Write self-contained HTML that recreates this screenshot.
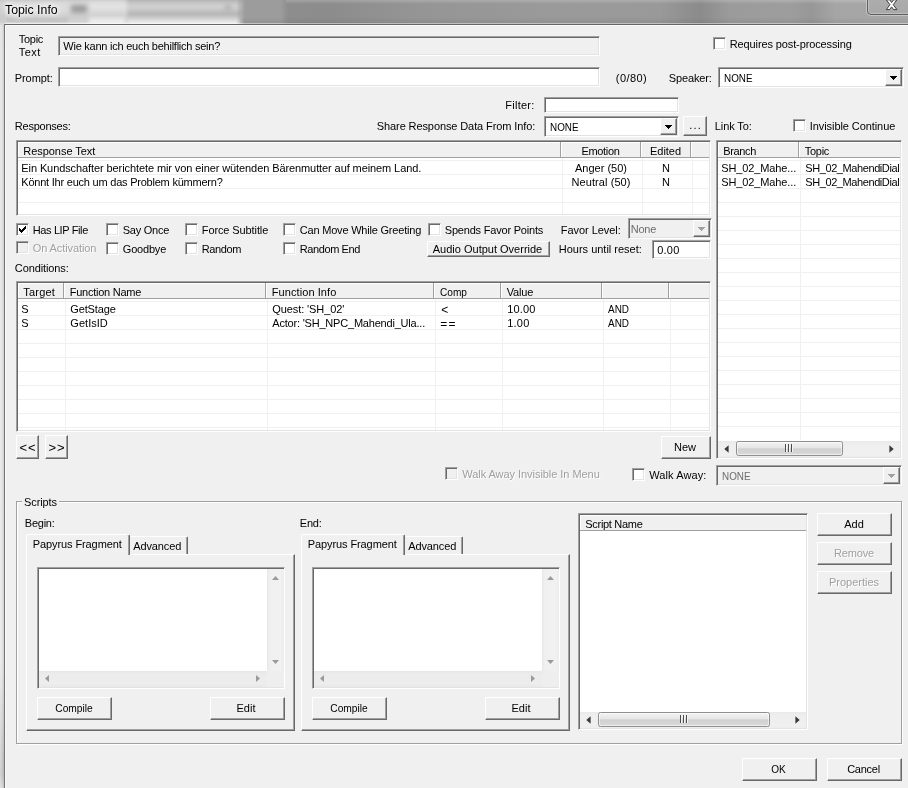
<!DOCTYPE html><html><head><meta charset="utf-8"><title>Topic Info</title><style>
*{box-sizing:border-box;margin:0;padding:0}
html,body{width:908px;height:788px;overflow:hidden;background:#f0f0f0}
body{filter:grayscale(1)}
body{position:relative;font-family:"Liberation Sans",sans-serif;font-size:11px;color:#000;line-height:13px;letter-spacing:-0.1px}
.a{position:absolute}
.t{position:absolute;white-space:nowrap;line-height:13px;height:13px}
.dis{color:#a0a0a0;text-shadow:1px 1px 0 #fff}
.sunk{position:absolute;border:1px solid;border-color:#a0a0a0 #fff #fff #a0a0a0;box-shadow:inset 1px 1px 0 #696969,inset -1px -1px 0 #e3e3e3;background:#fff}
.sunk.g{background:#f0f0f0}
.btn{position:absolute;border:1px solid;border-color:#fff #696969 #696969 #fff;box-shadow:inset -1px -1px 0 #a0a0a0,inset 1px 1px 0 #f0f0f0;background:#f0f0f0;text-align:center;white-space:nowrap}
.btn span{position:absolute;left:0;right:0;line-height:13px}
.cb{position:absolute;width:13px;height:13px;border:1px solid;border-color:#a0a0a0 #fff #fff #a0a0a0;box-shadow:inset 1px 1px 0 #696969,inset -1px -1px 0 #e3e3e3;background:#fff}
.cb.g{background:#f0f0f0}
.hd{position:absolute;background:#f0f0f0;border-right:1px solid #a0a0a0;border-bottom:1px solid #a0a0a0;box-shadow:inset 1px 1px 0 #fff;white-space:nowrap;overflow:hidden}
.hd span{position:absolute;line-height:13px;top:3px}
.gl{position:absolute;background:#f0f0f0}
</style></head><body>
<div class="a" id="tb" style="left:0;top:0;width:908px;height:25px;overflow:hidden;background:linear-gradient(90deg,#9c9c9c 0,#9c9c9c 281px,#8d8d8d 288px,#8c8c8c 330px,#959595 420px,#9a9a9a 560px,#999 660px,#8b8b8b 700px,#9b9b9b 730px,#9d9d9d 790px,#979797 812px,#a5a5a5 835px,#a7a7a7 908px)">
<div class="a" style="left:0;top:0;width:246px;height:25px;-webkit-mask-image:linear-gradient(90deg,#000 0,#000 236px,transparent 245px);mask-image:linear-gradient(90deg,#000 0,#000 236px,transparent 245px);background:linear-gradient(#c9c9c9 0,#d6d6d6 2px,#dcdcdc 5px,#dbdbdb 10px,#d3d3d3 14px,#cecece 18px,#d2d2d2 22px,#e6e6e6 23px)">
<div class="a" style="left:124px;top:0;width:122px;height:24px;-webkit-mask-image:linear-gradient(90deg,transparent,#000 6px,#000 116px,transparent);mask-image:linear-gradient(90deg,transparent,#000 6px,#000 116px,transparent);background:linear-gradient(#b4b4b4 0,#c0c0c0 2px,#cecece 5px,#cecece 8px,#c2c2c2 11px,#b7b7b7 14px,#c6c6c6 17px,#dadada 20px,#eeeeee 23px)"></div>
<div class="a" style="left:86px;top:0;width:42px;height:24px;-webkit-mask-image:linear-gradient(90deg,transparent,#000 6px,#000 36px,transparent);mask-image:linear-gradient(90deg,transparent,#000 6px,#000 36px,transparent);background:linear-gradient(#cfcfcf 0,#dedede 3px,#e3e3e3 7px,#d8d8d8 12px,#d2d2d2 15px,#e4e4e4 19px,#f0f0f0 23px)"></div>
<div class="a" style="left:6px;top:18px;width:62px;height:4px;background:#c2c2c2;filter:blur(1.500px)"></div>
<div class="a" style="left:71px;top:5px;width:16px;height:8px;background:#9a9a9a;filter:blur(2.500px)"></div>
<div class="a" style="left:225px;top:5px;width:6px;height:5px;background:#aaa;filter:blur(2.500px)"></div>
<div class="a" style="left:0;top:0;width:5px;height:25px;background:rgba(200,200,200,.5)"></div>
</div>
<div class="a" style="left:286px;top:0;width:622px;height:4px;background:linear-gradient(rgba(255,255,255,.2),rgba(255,255,255,0))"></div>
<div class="a" style="left:240px;top:17px;width:668px;height:6px;background:linear-gradient(rgba(0,0,0,0),rgba(0,0,0,.06))"></div>
<div class="a" style="left:5px;top:23px;width:903px;height:1px;background:rgba(255,255,255,.4)"></div>
</div>
<div class="a" style="left:0;top:25px;width:4px;height:763px;background:linear-gradient(#e2e2e2 0,#e6e6e6 640px,#cfcfcf 720px,#c8c8c8 750px,#dadada 763px)"></div>
<div class="a" style="left:0;top:25px;width:4px;height:763px;background:linear-gradient(90deg,rgba(255,255,255,.25),rgba(255,255,255,0) 2px,rgba(0,0,0,.1) 4px)"></div>
<div class="a" style="left:4px;top:24px;width:904px;height:1px;background:#666"></div>
<div class="a" style="left:4px;top:24px;width:1px;height:764px;background:#747474"></div>
<div class="a" style="left:5px;top:25px;width:903px;height:1px;background:#fafafa"></div>
<div class="a" style="left:5px;top:25px;width:1px;height:763px;background:#fafafa"></div>
<div class="t" style="left:5px;top:3px;font-size:12.3px;line-height:15px;height:15px;letter-spacing:0;text-shadow:0 0 5px #fff,0 0 5px #fff,0 0 8px #fff,0 0 10px #fff">Topic Info</div>
<div class="a" style="left:866px;top:-3px;width:46px;height:19px;border:1px solid rgba(255,255,255,.35);border-radius:0 0 0 5px"></div>
<div class="a" style="left:867px;top:-3px;width:45px;height:18px;border:1px solid #5e5e5e;border-radius:0 0 0 4px;background:linear-gradient(#adadad,#a8a8a8);box-shadow:inset 0 0 0 1px rgba(255,255,255,.25)"></div>
<svg class="a" style="left:884px;top:-1px" width="16" height="13" viewBox="0 0 16 13"><path d="M2.30 0.80 L5.60 0.80 L7.60 3.48 L9.60 0.80 L12.90 0.80 L9.25 5.70 L12.90 10.60 L9.60 10.60 L7.60 7.92 L5.60 10.60 L2.30 10.60 L5.95 5.70z" fill="#fbfbfb" stroke="#3e3e48" stroke-width="1" stroke-linejoin="round"/></svg>
<div class="t " style="left:18.8px;top:33px;letter-spacing:-0.297px;">Topic</div>
<div class="t " style="left:18.8px;top:46px;letter-spacing:0.438px;">Text</div>
<div class="sunk g" style="left:58px;top:36px;width:542px;height:20px"><div class="t" style="left:4.3px;top:3px;letter-spacing:-0.245px;">Wie kann ich euch behilflich sein?</div></div>
<div class="cb " style="left:713px;top:37px"></div>
<div class="t " style="left:729.8px;top:38px;letter-spacing:-0.119px;">Requires post-processing</div>
<div class="t " style="left:14.8px;top:72px;letter-spacing:-0.086px;">Prompt:</div>
<div class="sunk " style="left:58px;top:67px;width:542px;height:20px"></div>
<div class="t " style="left:615.8px;top:72px;letter-spacing:0.45px;">(0/80)</div>
<div class="t " style="left:668.8px;top:72px;letter-spacing:-0.147px;">Speaker:</div>
<div class="sunk " style="left:718px;top:67px;width:186px;height:21px">
<div class="t" style="left:4.8px;top:4px;letter-spacing:0;transform:scaleX(0.897);transform-origin:left center;">NONE</div>
<div class="btn" style="right:1px;top:1px;width:17px;height:17px;left:auto">
<svg class="a" style="left:4px;top:6px" width="7" height="4" viewBox="0 0 7 4" shape-rendering="crispEdges"><path d="M0 0h7l-3.5 4z" fill="#000"/></svg>
</div></div>
<div class="t " style="left:505.3px;top:99px;letter-spacing:0.25px;">Filter:</div>
<div class="sunk " style="left:544px;top:97px;width:135px;height:16px"></div>
<div class="t " style="left:14.8px;top:120px;letter-spacing:-0.233px;">Responses:</div>
<div class="t " style="left:376.8px;top:120px;letter-spacing:-0.101px;">Share Response Data From Info:</div>
<div class="sunk " style="left:544px;top:116px;width:135px;height:21px">
<div class="t" style="left:4.8px;top:4px;letter-spacing:0;transform:scaleX(0.897);transform-origin:left center;">NONE</div>
<div class="btn" style="right:1px;top:1px;width:17px;height:17px;left:auto">
<svg class="a" style="left:4px;top:6px" width="7" height="4" viewBox="0 0 7 4" shape-rendering="crispEdges"><path d="M0 0h7l-3.5 4z" fill="#000"/></svg>
</div></div>
<div class="btn" style="left:683px;top:116px;width:24px;height:20px"><span class="" style="top:2px;left:0px;"><b style="font-weight:400;letter-spacing:1.2px;margin-right:-1.2px">...</b></span></div>
<div class="t " style="left:714.8px;top:120px;letter-spacing:-0.103px;">Link To:</div>
<div class="cb " style="left:793px;top:119px"></div>
<div class="t " style="left:809.8px;top:120px;letter-spacing:-0.079px;">Invisible Continue</div>
<div class="sunk" style="left:16px;top:140px;width:695px;height:76px;overflow:hidden">
<div class="a" style="left:1px;top:1px;width:691px;height:72px;overflow:hidden">
<div class="gl" style="left:0;top:18px;width:691px;height:1px"></div>
<div class="gl" style="left:0;top:32px;width:691px;height:1px"></div>
<div class="gl" style="left:0;top:46px;width:691px;height:1px"></div>
<div class="gl" style="left:0;top:60px;width:691px;height:1px"></div>
<div class="gl" style="left:544px;top:16px;width:1px;height:56px"></div>
<div class="hd" style="left:0px;top:0;width:543px;height:16px"><span style="left:5.3px;letter-spacing:-0.048px;">Response Text</span></div>
<div class="gl" style="left:624px;top:16px;width:1px;height:56px"></div>
<div class="hd" style="left:543px;top:0;width:80px;height:16px"><span style="left:0;right:0;text-align:center;letter-spacing:-0.31px;">Emotion</span></div>
<div class="gl" style="left:674px;top:16px;width:1px;height:56px"></div>
<div class="hd" style="left:623px;top:0;width:50px;height:16px"><span style="left:0;right:0;text-align:center;letter-spacing:-0.041px;">Edited</span></div>
<div class="hd" style="left:673px;top:0;width:20px;height:16px"><span style="left:5.8px;"></span></div>
<div class="t" style="left:3.3px;top:20px;letter-spacing:-0.093px;">Ein Kundschafter berichtete mir von einer wütenden Bärenmutter auf meinem Land.</div>
<div class="t" style="left:543px;width:80px;top:20px;text-align:center;letter-spacing:0.002px;">Anger (50)</div>
<div class="t" style="left:623px;width:50px;top:20px;text-align:center;">N</div>
<div class="t" style="left:3.3px;top:34px;letter-spacing:-0.222px;">Könnt Ihr euch um das Problem kümmern?</div>
<div class="t" style="left:543px;width:80px;top:34px;text-align:center;letter-spacing:0.084px;">Neutral (50)</div>
<div class="t" style="left:623px;width:50px;top:34px;text-align:center;">N</div>

</div></div>
<div class="sunk" style="left:716px;top:140px;width:186px;height:319px;overflow:hidden">
<div class="a" style="left:1px;top:1px;width:182px;height:315px;overflow:hidden">
<div class="gl" style="left:0;top:18px;width:182px;height:1px"></div>
<div class="gl" style="left:0;top:32px;width:182px;height:1px"></div>
<div class="gl" style="left:0;top:46px;width:182px;height:1px"></div>
<div class="gl" style="left:0;top:60px;width:182px;height:1px"></div>
<div class="gl" style="left:0;top:74px;width:182px;height:1px"></div>
<div class="gl" style="left:0;top:88px;width:182px;height:1px"></div>
<div class="gl" style="left:0;top:102px;width:182px;height:1px"></div>
<div class="gl" style="left:0;top:116px;width:182px;height:1px"></div>
<div class="gl" style="left:0;top:130px;width:182px;height:1px"></div>
<div class="gl" style="left:0;top:144px;width:182px;height:1px"></div>
<div class="gl" style="left:0;top:158px;width:182px;height:1px"></div>
<div class="gl" style="left:0;top:172px;width:182px;height:1px"></div>
<div class="gl" style="left:0;top:186px;width:182px;height:1px"></div>
<div class="gl" style="left:0;top:200px;width:182px;height:1px"></div>
<div class="gl" style="left:0;top:214px;width:182px;height:1px"></div>
<div class="gl" style="left:0;top:228px;width:182px;height:1px"></div>
<div class="gl" style="left:0;top:242px;width:182px;height:1px"></div>
<div class="gl" style="left:0;top:256px;width:182px;height:1px"></div>
<div class="gl" style="left:0;top:270px;width:182px;height:1px"></div>
<div class="gl" style="left:0;top:284px;width:182px;height:1px"></div>
<div class="gl" style="left:82px;top:16px;width:1px;height:282px"></div>
<div class="hd" style="left:0px;top:0;width:81px;height:16px"><span style="left:5.3px;letter-spacing:-0.372px;">Branch</span></div>
<div class="hd" style="left:81px;top:0;width:103px;height:16px"><span style="left:5.8px;letter-spacing:-0.297px;">Topic</span></div>
<div class="t" style="left:3.3px;top:20px;letter-spacing:-0.12px;">SH_02_Mahe...</div>
<div class="t" style="left:87.3px;top:20px;letter-spacing:-0.413px;">SH_02_MahendiDial</div>
<div class="t" style="left:3.3px;top:34px;letter-spacing:-0.12px;">SH_02_Mahe...</div>
<div class="t" style="left:87.3px;top:34px;letter-spacing:-0.413px;">SH_02_MahendiDial</div>
<div class="a" style="left:0px;top:299px;width:182px;height:17px;background:linear-gradient(#e9e9e9,#eee 3px,#f0f0f0 14px,#ebebeb)"><svg class="a" style="left:6px;top:4px" width="5" height="8" viewBox="0 0 5 8"><path d="M4.600 .3v7.400L.3 4z" fill="#3a3a3a"/></svg><svg class="a" style="right:6px;top:4px" width="5" height="8" viewBox="0 0 5 8"><path d="M.4 .3v7.400L4.700 4z" fill="#3a3a3a"/></svg><div class="a" style="left:18px;top:0;width:107px;height:15px;border:1px solid #8f8f8f;border-radius:2.500px;background:linear-gradient(#f3f3f3,#e6e6e6 46%,#d0d0d0 52%,#d9d9d9);box-shadow:inset 0 0 0 1px rgba(255,255,255,.55)"><div class="a" style="left:48px;top:2px;width:1px;height:8px;background:#4c4c4c;box-shadow:3px 0 0 #4c4c4c,6px 0 0 #4c4c4c,1px 0 0 #f4f4f4,4px 0 0 #f4f4f4,7px 0 0 #f4f4f4"></div></div></div>
</div></div>
<div class="cb " style="left:16px;top:223px"><svg class="a" style="left:2px;top:2px" width="7" height="7" viewBox="0 0 7 7"><path d="M0 2v3l2 2 5-5V-1L2 4z" fill="#000" shape-rendering="crispEdges"/></svg></div>
<div class="t " style="left:32.8px;top:224px;letter-spacing:-0.384px;">Has LIP File</div>
<div class="cb " style="left:106px;top:223px"></div>
<div class="t " style="left:122.8px;top:224px;letter-spacing:-0.259px;">Say Once</div>
<div class="cb " style="left:185px;top:223px"></div>
<div class="t " style="left:201.8px;top:224px;letter-spacing:-0.106px;">Force Subtitle</div>
<div class="cb " style="left:283px;top:223px"></div>
<div class="t " style="left:299.8px;top:224px;letter-spacing:-0.202px;">Can Move While Greeting</div>
<div class="cb " style="left:428px;top:223px"></div>
<div class="t " style="left:444.8px;top:224px;letter-spacing:-0.201px;">Spends Favor Points</div>
<div class="t " style="left:560.8px;top:224px;letter-spacing:-0.048px;">Favor Level:</div>
<div class="sunk g" style="left:628px;top:218px;width:84px;height:21px">
<div class="t" style="left:1.8px;top:4px;letter-spacing:-0.266px;color:#6d6d6d;">None</div>
<div class="btn" style="right:1px;top:1px;width:17px;height:17px;left:auto">
<svg class="a" style="left:4px;top:6px" width="7" height="4" viewBox="0 0 7 4" shape-rendering="crispEdges"><path d="M0 0h7l-3.5 4z" fill="#a0a0a0"/></svg>
</div></div>
<div class="cb g" style="left:16px;top:241px"></div>
<div class="t dis" style="left:32.8px;top:242px;max-width:63px;overflow:hidden">On Activation</div>
<div class="cb " style="left:106px;top:242px"></div>
<div class="t " style="left:122.8px;top:243px;letter-spacing:-0.193px;">Goodbye</div>
<div class="cb " style="left:185px;top:242px"></div>
<div class="t " style="left:201.8px;top:243px;letter-spacing:-0.416px;">Random</div>
<div class="cb " style="left:283px;top:242px"></div>
<div class="t " style="left:299.8px;top:243px;letter-spacing:-0.413px;">Random End</div>
<div class="btn" style="left:427px;top:241px;width:123px;height:16px"><span class="" style="top:1px;left:-2px;letter-spacing:0.002px;">Audio Output Override</span></div>
<div class="t " style="left:558.8px;top:243px;letter-spacing:-0.009px;">Hours until reset:</div>
<div class="sunk " style="left:652px;top:240px;width:59px;height:19px"><div class="t" style="left:4.3px;top:3px;letter-spacing:0.193px;">0.00</div></div>
<div class="t " style="left:14.8px;top:262px;letter-spacing:-0.105px;">Conditions:</div>
<div class="sunk" style="left:16px;top:281px;width:695px;height:151px;overflow:hidden">
<div class="a" style="left:1px;top:1px;width:691px;height:147px;overflow:hidden">
<div class="gl" style="left:0;top:18px;width:691px;height:1px"></div>
<div class="gl" style="left:0;top:32px;width:691px;height:1px"></div>
<div class="gl" style="left:0;top:46px;width:691px;height:1px"></div>
<div class="gl" style="left:0;top:60px;width:691px;height:1px"></div>
<div class="gl" style="left:0;top:74px;width:691px;height:1px"></div>
<div class="gl" style="left:0;top:88px;width:691px;height:1px"></div>
<div class="gl" style="left:0;top:102px;width:691px;height:1px"></div>
<div class="gl" style="left:0;top:116px;width:691px;height:1px"></div>
<div class="gl" style="left:0;top:130px;width:691px;height:1px"></div>
<div class="gl" style="left:0;top:144px;width:691px;height:1px"></div>
<div class="gl" style="left:47px;top:16px;width:1px;height:131px"></div>
<div class="hd" style="left:0px;top:0;width:46px;height:16px"><span style="left:5.3px;letter-spacing:0.184px;">Target</span></div>
<div class="gl" style="left:249px;top:16px;width:1px;height:131px"></div>
<div class="hd" style="left:46px;top:0;width:202px;height:16px"><span style="left:5.8px;letter-spacing:-0.258px;">Function Name</span></div>
<div class="gl" style="left:417px;top:16px;width:1px;height:131px"></div>
<div class="hd" style="left:248px;top:0;width:168px;height:16px"><span style="left:5.8px;letter-spacing:0.076px;">Function Info</span></div>
<div class="gl" style="left:484px;top:16px;width:1px;height:131px"></div>
<div class="hd" style="left:416px;top:0;width:67px;height:16px"><span style="left:5.8px;letter-spacing:0;transform:scaleX(0.920);transform-origin:left center;">Comp</span></div>
<div class="gl" style="left:585px;top:16px;width:1px;height:131px"></div>
<div class="hd" style="left:483px;top:0;width:101px;height:16px"><span style="left:5.8px;letter-spacing:-0.207px;">Value</span></div>
<div class="gl" style="left:652px;top:16px;width:1px;height:131px"></div>
<div class="hd" style="left:584px;top:0;width:67px;height:16px"><span style="left:5.8px;"></span></div>
<div class="hd" style="left:651px;top:0;width:42px;height:16px"><span style="left:5.8px;"></span></div>
<div class="t" style="left:3.3px;top:20px;">S</div>
<div class="t" style="left:52.3px;top:20px;letter-spacing:-0.141px;">GetStage</div>
<div class="t" style="left:254.3px;top:20px;letter-spacing:-0.1px;">Quest: 'SH_02'</div>
<div class="t" style="left:423.3px;top:21px;font-size:12px;letter-spacing:1.3px">&lt;</div>
<div class="t" style="left:489.3px;top:20px;letter-spacing:0.117px;">10.00</div>
<div class="t" style="left:590.3px;top:20px;letter-spacing:0;transform:scaleX(0.904);transform-origin:left center;">AND</div>
<div class="t" style="left:3.3px;top:34px;">S</div>
<div class="t" style="left:52.3px;top:34px;letter-spacing:0.034px;">GetIsID</div>
<div class="t" style="left:254.3px;top:34px;letter-spacing:-0.201px;">Actor: 'SH_NPC_Mahendi_Ula...</div>
<div class="t" style="left:422.3px;top:35px;font-size:12px;letter-spacing:1.3px">==</div>
<div class="t" style="left:489.3px;top:34px;letter-spacing:0.193px;">1.00</div>
<div class="t" style="left:590.3px;top:34px;letter-spacing:0;transform:scaleX(0.904);transform-origin:left center;">AND</div>

</div></div>
<div class="btn" style="left:16px;top:435px;width:23px;height:24px"><span class="" style="top:5px;left:0px;"><b style="font-weight:400;font-size:13px;letter-spacing:1px;margin-right:-1px">&lt;&lt;</b></span></div>
<div class="btn" style="left:45px;top:435px;width:23px;height:24px"><span class="" style="top:5px;left:0px;"><b style="font-weight:400;font-size:13px;letter-spacing:1px;margin-right:-1px">&gt;&gt;</b></span></div>
<div class="btn" style="left:661px;top:436px;width:50px;height:23px"><span class="" style="top:4px;left:-2px;letter-spacing:-0.008px;">New</span></div>
<div class="cb g" style="left:445px;top:467px"></div>
<div class="t dis" style="left:462.3px;top:468px;letter-spacing:-0.05px;">Walk Away Invisible In Menu</div>
<div class="cb " style="left:632px;top:468px"></div>
<div class="t " style="left:649.3px;top:469px;letter-spacing:0.083px;">Walk Away:</div>
<div class="sunk g" style="left:716px;top:465px;width:186px;height:21px">
<div class="t" style="left:4.8px;top:4px;letter-spacing:0;transform:scaleX(0.897);transform-origin:left center;color:#6d6d6d;">NONE</div>
<div class="btn" style="right:1px;top:1px;width:17px;height:17px;left:auto">
<svg class="a" style="left:4px;top:6px" width="7" height="4" viewBox="0 0 7 4" shape-rendering="crispEdges"><path d="M0 0h7l-3.5 4z" fill="#a0a0a0"/></svg>
</div></div>
<div class="a" style="left:16px;top:501px;width:886px;height:243px;border:1px solid #a0a0a0;box-shadow:inset 1px 1px 0 #fff,1px 1px 0 #fff"></div>
<div class="t" style="left:21.5px;top:496px;background:#f0f0f0;padding:0 2.5px;letter-spacing:-0.104px;">Scripts</div>
<div class="t " style="left:24.8px;top:517px;letter-spacing:-0.241px;">Begin:</div>
<div class="t " style="left:299.8px;top:517px;letter-spacing:-0.214px;">End:</div>
<div class="a" style="left:26px;top:554px;width:269px;height:177px;border:1px solid;border-color:#fff #696969 #696969 #fff;box-shadow:inset -1px -1px 0 #a0a0a0"></div>
<div class="a" style="left:26px;top:534px;width:104px;height:21px;background:#f0f0f0;border:1px solid;border-color:#fff #696969 #f0f0f0 #fff;border-bottom:0;border-radius:2px 2px 0 0;box-shadow:inset -1px 0 0 #a0a0a0"></div>
<div class="t " style="left:32.8px;top:538px;letter-spacing:-0.099px;">Papyrus Fragment</div>
<div class="a" style="left:130px;top:536px;width:58px;height:18px;background:#f0f0f0;border:1px solid;border-color:#fff #696969 #f0f0f0 #f0f0f0;border-bottom:0;border-radius:0 2px 0 0;box-shadow:inset -1px 0 0 #a0a0a0"></div>
<div class="t " style="left:133.3px;top:540px;letter-spacing:-0.134px;">Advanced</div>
<div class="sunk" style="left:37px;top:567px;width:248px;height:122px">
<div class="a" style="left:229px;top:1px;width:17px;height:102px;background:linear-gradient(90deg,#e8e8e8,#f0f0f0 3px,#f1f1f1 14px,#ececec)"></div>
<svg class="a" style="left:234px;top:8px" width="7" height="4" viewBox="0 0 7 4"><path d="M0 4h7L3.500 0z" fill="#9a9a9a"/></svg>
<svg class="a" style="left:234px;top:92px" width="7" height="4" viewBox="0 0 7 4"><path d="M0 0h7L3.500 4z" fill="#9a9a9a"/></svg>
<div class="a" style="left:1px;top:103px;width:228px;height:16px;background:linear-gradient(#e6e6e6,#ececec 3px,#ededed 13px,#e8e8e8)"></div>
<div class="a" style="left:229px;top:103px;width:17px;height:16px;background:#eee"></div>
<svg class="a" style="left:7px;top:107px" width="4" height="7" viewBox="0 0 4 7"><path d="M4 0v7L0 3.500z" fill="#9a9a9a"/></svg>
<svg class="a" style="left:218px;top:107px" width="4" height="7" viewBox="0 0 4 7"><path d="M0 0v7L4 3.500z" fill="#9a9a9a"/></svg>
</div>
<div class="btn" style="left:37px;top:697px;width:75px;height:23px"><span class="" style="top:4px;left:-1px;letter-spacing:0;transform:scaleX(0.929);transform-origin:center center;">Compile</span></div>
<div class="btn" style="left:210px;top:697px;width:75px;height:23px"><span class="" style="top:4px;left:-3px;letter-spacing:0.01px;">Edit</span></div>
<div class="a" style="left:301px;top:554px;width:269px;height:177px;border:1px solid;border-color:#fff #696969 #696969 #fff;box-shadow:inset -1px -1px 0 #a0a0a0"></div>
<div class="a" style="left:301px;top:534px;width:104px;height:21px;background:#f0f0f0;border:1px solid;border-color:#fff #696969 #f0f0f0 #fff;border-bottom:0;border-radius:2px 2px 0 0;box-shadow:inset -1px 0 0 #a0a0a0"></div>
<div class="t " style="left:307.8px;top:538px;letter-spacing:-0.099px;">Papyrus Fragment</div>
<div class="a" style="left:405px;top:536px;width:58px;height:18px;background:#f0f0f0;border:1px solid;border-color:#fff #696969 #f0f0f0 #f0f0f0;border-bottom:0;border-radius:0 2px 0 0;box-shadow:inset -1px 0 0 #a0a0a0"></div>
<div class="t " style="left:408.3px;top:540px;letter-spacing:-0.134px;">Advanced</div>
<div class="sunk" style="left:312px;top:567px;width:248px;height:122px">
<div class="a" style="left:229px;top:1px;width:17px;height:102px;background:linear-gradient(90deg,#e8e8e8,#f0f0f0 3px,#f1f1f1 14px,#ececec)"></div>
<svg class="a" style="left:234px;top:8px" width="7" height="4" viewBox="0 0 7 4"><path d="M0 4h7L3.500 0z" fill="#9a9a9a"/></svg>
<svg class="a" style="left:234px;top:92px" width="7" height="4" viewBox="0 0 7 4"><path d="M0 0h7L3.500 4z" fill="#9a9a9a"/></svg>
<div class="a" style="left:1px;top:103px;width:228px;height:16px;background:linear-gradient(#e6e6e6,#ececec 3px,#ededed 13px,#e8e8e8)"></div>
<div class="a" style="left:229px;top:103px;width:17px;height:16px;background:#eee"></div>
<svg class="a" style="left:7px;top:107px" width="4" height="7" viewBox="0 0 4 7"><path d="M4 0v7L0 3.500z" fill="#9a9a9a"/></svg>
<svg class="a" style="left:218px;top:107px" width="4" height="7" viewBox="0 0 4 7"><path d="M0 0v7L4 3.500z" fill="#9a9a9a"/></svg>
</div>
<div class="btn" style="left:312px;top:697px;width:75px;height:23px"><span class="" style="top:4px;left:-1px;letter-spacing:0;transform:scaleX(0.929);transform-origin:center center;">Compile</span></div>
<div class="btn" style="left:485px;top:697px;width:75px;height:23px"><span class="" style="top:4px;left:-3px;letter-spacing:0.01px;">Edit</span></div>
<div class="sunk" style="left:578px;top:513px;width:230px;height:217px;overflow:hidden">
<div class="a" style="left:1px;top:1px;width:226px;height:213px;overflow:hidden">
<div class="hd" style="left:0px;top:0;width:228px;height:16px"><span style="left:5.3px;letter-spacing:-0.303px;">Script Name</span></div>
<div class="a" style="left:0px;top:197px;width:226px;height:17px;background:linear-gradient(#e9e9e9,#eee 3px,#f0f0f0 14px,#ebebeb)"><svg class="a" style="left:6px;top:4px" width="5" height="8" viewBox="0 0 5 8"><path d="M4.600 .3v7.400L.3 4z" fill="#3a3a3a"/></svg><svg class="a" style="right:6px;top:4px" width="5" height="8" viewBox="0 0 5 8"><path d="M.4 .3v7.400L4.700 4z" fill="#3a3a3a"/></svg><div class="a" style="left:18px;top:0;width:172px;height:15px;border:1px solid #8f8f8f;border-radius:2.500px;background:linear-gradient(#f3f3f3,#e6e6e6 46%,#d0d0d0 52%,#d9d9d9);box-shadow:inset 0 0 0 1px rgba(255,255,255,.55)"><div class="a" style="left:81px;top:2px;width:1px;height:8px;background:#4c4c4c;box-shadow:3px 0 0 #4c4c4c,6px 0 0 #4c4c4c,1px 0 0 #f4f4f4,4px 0 0 #f4f4f4,7px 0 0 #f4f4f4"></div></div></div>
</div></div>
<div class="btn" style="left:817px;top:513px;width:75px;height:23px"><span class="" style="top:4px;left:-1px;letter-spacing:-0.039px;">Add</span></div>
<div class="btn" style="left:817px;top:542px;width:75px;height:23px"><span class="dis" style="top:4px;left:-1px;letter-spacing:-0.194px;">Remove</span></div>
<div class="btn" style="left:817px;top:571px;width:75px;height:23px"><span class="dis" style="top:4px;left:-1px;letter-spacing:-0.016px;">Properties</span></div>
<div class="btn" style="left:742px;top:758px;width:75px;height:23px"><span class="" style="top:4px;left:-2px;letter-spacing:0;transform:scaleX(0.912);transform-origin:center center;">OK</span></div>
<div class="btn" style="left:827px;top:758px;width:75px;height:23px"><span class="" style="top:4px;left:-2px;letter-spacing:-0.25px;">Cancel</span></div>
</body></html>
